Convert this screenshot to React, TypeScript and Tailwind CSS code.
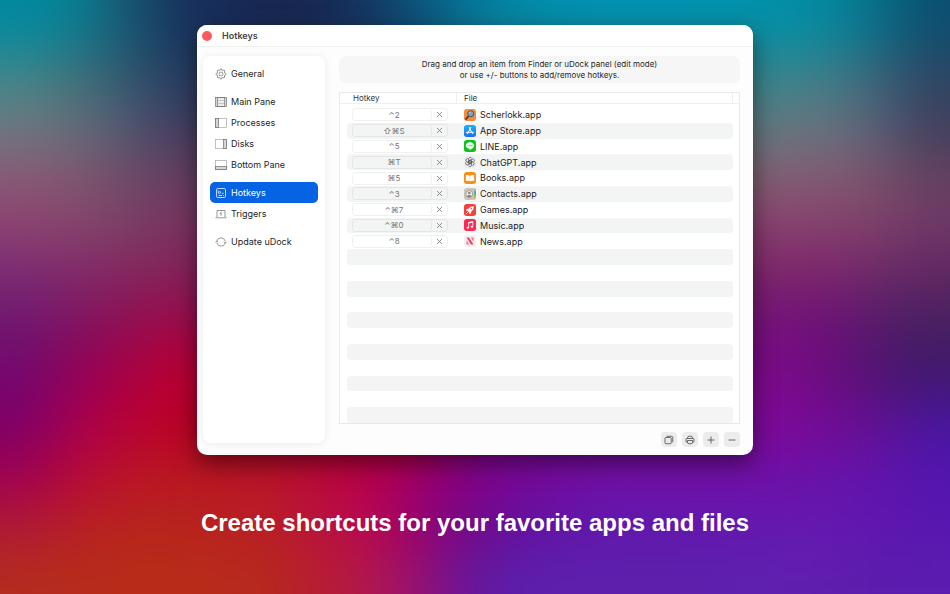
import React, { useState } from "react";

type IconName = "general" | "main" | "processes" | "disks" | "bottom" | "hotkeys" | "triggers" | "update";
type AppName = "scherlokk" | "store" | "line" | "chatgpt" | "books" | "contacts" | "games" | "music" | "news";

type NavEntry = { label: string; icon: IconName };
type HotkeyEntry = { keys: string; file: string; icon: AppName };

const navGroups: NavEntry[][] = [
  [{ label: "General", icon: "general" }],
  [
    { label: "Main Pane", icon: "main" },
    { label: "Processes", icon: "processes" },
    { label: "Disks", icon: "disks" },
    { label: "Bottom Pane", icon: "bottom" },
  ],
  [
    { label: "Hotkeys", icon: "hotkeys" },
    { label: "Triggers", icon: "triggers" },
  ],
  [{ label: "Update uDock", icon: "update" }],
];

const hotkeys: HotkeyEntry[] = [
  { keys: "⌃2", file: "Scherlokk.app", icon: "scherlokk" },
  { keys: "⇧⌘S", file: "App Store.app", icon: "store" },
  { keys: "⌃5", file: "LINE.app", icon: "line" },
  { keys: "⌘T", file: "ChatGPT.app", icon: "chatgpt" },
  { keys: "⌘5", file: "Books.app", icon: "books" },
  { keys: "⌃3", file: "Contacts.app", icon: "contacts" },
  { keys: "⌃⌘7", file: "Games.app", icon: "games" },
  { keys: "⌃⌘0", file: "Music.app", icon: "music" },
  { keys: "⌃8", file: "News.app", icon: "news" },
];

const ROWS = 20;

// wallpaper colours, one string per 50px band: left edge, (middle), right edge
const bands = [
  "0089a0 087f94 185872 17345e 172a58 17254f 162852 123a66 0a5a80 04789a 008aa8 0090b0 0092b2 0092b0 0092ae 0090a8 0489a0 07708a 0a4f70",
  "40888a 3f7078 305a70 243c60 - 35848a 3f8088 3a6478 2e4663",
  "6b7a80 63707a 525a72 403c5e - 607a80 68747f 56627a 3f3f5c",
  "8a5a76 80586f 6f4c68 643e60 - 80606f 855c74 7a5468 644260",
  "8c4270 88446c 7c4068 78345e - 8a4070 86406c 80406a 703868",
  "7a2a74 80286a 84265e 84205a - 7c2468 7c246c 6c2868 602662",
  "6e1670 7e1260 900c52 9c0848 - 74107c 6c0f78 541a6c 44205f",
  "75066e 920058 ac0046 bc0030 - 7c0a88 6c0c80 50146f 40186e",
  "7c006a a80050 b80038 b80024 - 800898 740a98 641090 4816a0",
  "a00050 b80838 ba1428 ba1820 ba1824 ba142c ba0840 b80054 94007a 800088 780898 740ca0 7010a8 7010a8 7010a8 6c10a6 6812a8 6014ac 5414b0",
  "b01838 b82024 b8241e b6241c b82020 b81e28 ba1040 b80450 900070 700a88 6210a0 5e16ac 6018ac 6018ac 6018ae 6418b0 6418b0 6016b0 5816b0",
  "b42c1e b62c1a b82c18 b82c18 b82c1a b6281e b81c34 b01850 90107a 6018a0 5c20ac 5e20ac 5e20ac 5e20ac 5e20ae 6020b0 601eae 5c1cac 5c1cb0",
];

const expandBand = (band: string) => {
  const cells = band.split(" ");
  const gap = cells.indexOf("-");
  if (gap < 0) return cells;
  const left = cells.slice(0, gap);
  const right = cells.slice(gap + 1);
  return [...left, ...Array(5).fill(left[3]), ...Array(6).fill(right[0]), ...right];
};

const Wallpaper = () => {
  const rows = bands.map(expandBand);
  const grid = [rows[0], ...rows, rows[rows.length - 1]].map((r) => [r[0], ...r, r[r.length - 1]]);
  return (
    <svg
      className="absolute inset-0 w-full h-full"
      viewBox="0 0 950 594"
      preserveAspectRatio="none"
      aria-hidden="true"
    >
      <defs>
        <filter id="soften" filterUnits="userSpaceOnUse" x="-100" y="-100" width="1150" height="800" colorInterpolationFilters="sRGB">
          <feGaussianBlur stdDeviation="28" />
        </filter>
      </defs>
      <rect width="950" height="594" fill="#5a1a70" />
      <g filter="url(#soften)">
        {grid.map((row, y) =>
          row.map((color, x) => (
            <rect
              key={`${x}-${y}`}
              x={x === 0 ? -200 : x * 50 - 50}
              y={y === 0 ? -200 : y * 50 - 50}
              width={x === 0 || x === row.length - 1 ? 200 : 51}
              height={y === 0 || y === grid.length - 1 ? 200 : 51}
              fill={`#${color}`}
            />
          ))
        )}
      </g>
    </svg>
  );
};

const navShapes: Record<IconName, React.ReactNode> = {
  general: (
    <>
      <path d="M10.7 2h2.6l.6 2.3 1.9.8 2.1-1.2 1.9 1.9-1.2 2.1.8 1.9 2.3.7v2.9l-2.3.7-.8 1.9 1.2 2.1-1.9 1.9-2.1-1.2-1.9.8-.6 2.3h-2.6l-.6-2.3-1.9-.8-2.1 1.2-1.9-1.9 1.2-2.1-.8-1.9-2.3-.7v-2.9l2.3-.7.8-1.9-1.2-2.1 1.9-1.9 2.1 1.2 1.9-.8z" />
      <circle cx="12" cy="12" r="4" />
    </>
  ),
  main: (
    <>
      <rect x="1" y="3" width="22" height="18" />
      <rect x="5" y="3" width="14" height="18" fill="currentColor" fillOpacity=".15" />
      <path d="M3 4v16M21 4v16M6 9h12M6 15h12" strokeOpacity=".4" />
    </>
  ),
  processes: (
    <>
      <rect x="1" y="3" width="22" height="18" strokeOpacity=".6" />
      <rect x="1" y="3" width="6" height="18" fill="currentColor" fillOpacity=".3" />
    </>
  ),
  disks: (
    <>
      <rect x="1" y="3" width="22" height="18" strokeOpacity=".6" />
      <rect x="17" y="3" width="6" height="18" fill="currentColor" fillOpacity=".3" />
    </>
  ),
  bottom: (
    <>
      <rect x="1" y="3" width="22" height="18" strokeOpacity=".6" />
      <rect x="1" y="15" width="22" height="6" fill="currentColor" fillOpacity=".3" />
    </>
  ),
  hotkeys: (
    <>
      <rect x="3" y="3" width="18" height="18" rx="2.5" />
      <path d="M6.500 7v5.500h4M9 8l3.500 4.500M14.500 12.500h3M7 17h7M15.500 15.500l2 2" />
    </>
  ),
  triggers: (
    <>
      <path d="M4 18V5h16v13M1 19.500h22" />
      <path d="M12.800 7.500l-2.300 4h3l-2.300 4" />
    </>
  ),
  update: (
    <>
      <path d="M3.500 10.500a8.700 8.700 0 0 1 17 0M20.500 13.500a8.700 8.700 0 0 1-17 0" />
      <path d="M1 13l2.500-3 3 2.500M23 11l-2.500 3-3-2.500" />
    </>
  ),
};

const NavIcon = ({ name }: { name: IconName }) => (
  <svg
    className="w-3 h-3 shrink-0"
    viewBox="0 0 24 24"
    fill="none"
    stroke="currentColor"
    strokeWidth="1.5"
    aria-hidden="true"
  >
    {navShapes[name]}
  </svg>
);

const appShapes: Record<AppName, React.ReactNode> = {
  scherlokk: (
    <>
      <rect width="24" height="24" rx="5.5" fill="#f58a3c" />
      <path d="M10 13.500l-6 6.500" stroke="#3d2f33" strokeWidth="3.400" strokeLinecap="round" />
      <circle cx="13.500" cy="9.500" r="6" fill="#7ba3c8" stroke="#46536b" strokeWidth="2" />
      <path d="M10.500 9a3 3 0 0 1 3-3" stroke="#d8e8f5" strokeWidth="1.500" fill="none" />
    </>
  ),
  store: (
    <>
      <rect width="24" height="24" rx="5.500" fill="url(#blue)" />
      <path d="M10.600 5l6.400 12.500M13.400 5L7 17.500M4.500 14.500h9M16 14.500h3.500" stroke="#fff" strokeWidth="2" strokeLinecap="round" />
    </>
  ),
  line: (
    <>
      <rect width="24" height="24" rx="5.500" fill="#0cc41c" />
      <path d="M12 4.500c-4.700 0-8.300 2.900-8.300 6.500 0 3.200 2.700 5.700 6.600 6.300.8.200.9.700.7 2.700 3.700-1.900 9.300-5 9.300-9 0-3.600-3.600-6.500-8.300-6.500z" fill="#fff" />
      <path d="M7.500 9.500v3h1.500M11 9.500v3M13 12.500v-3l1.500 3v-3M17.500 9.500h-1.200v3h1.200" stroke="#0cc41c" strokeWidth=".8" />
    </>
  ),
  chatgpt: (
    <>
      <rect width="24" height="24" rx="5.500" fill="#ececec" />
      <g fill="none" stroke="#4a4a4a" strokeWidth="1.300">
        {[0, 60, 120, 180, 240, 300].map((angle) => (
          <path key={angle} transform={`rotate(${angle} 12 12)`} d="M9 10.300V6.300a3.500 3.500 0 0 1 6.600-1.700M9 7.500l5.600 3.200v3.500" />
        ))}
      </g>
    </>
  ),
  books: (
    <>
      <rect width="24" height="24" rx="5.500" fill="#fb8f16" />
      <path d="M11.700 7.500C9.500 5.600 6.300 5.600 3.700 6.500v11.700c2.600-.9 5.800-.9 8 .5zM12.300 7.500c2.200-1.900 5.400-1.900 8-1v11.700c-2.600-.9-5.800-.9-8 .5z" fill="#fff" />
    </>
  ),
  contacts: (
    <>
      <rect width="24" height="24" rx="5.500" fill="#c9c6ba" />
      <path d="M20.500 1a4 4 0 0 1 3.500 4v3h-3.500z" fill="#a5a5a0" />
      <path d="M20.500 7H24v5h-3.500z" fill="#2ba8e8" />
      <path d="M20.500 12H24v5h-3.500z" fill="#44cc55" />
      <path d="M20.500 17H24v2a4 4 0 0 1-3.500 4z" fill="#f6a52a" />
      <circle cx="10.500" cy="12" r="7" fill="#eeece2" stroke="#8b897f" strokeWidth="1.400" />
      <circle cx="10.500" cy="10" r="2.600" fill="#8b897f" />
      <path d="M5.800 16.800c1.200-3.600 8.200-3.600 9.400 0-2.600 2.800-6.800 2.800-9.400 0z" fill="#8b897f" />
    </>
  ),
  games: (
    <>
      <rect width="24" height="24" rx="5.500" fill="#f5403c" />
      <path d="M19.500 4.500c-5-.4-8.300 1.800-10.500 5l-3.500.5-1.800 3 3.300.3 3.700 3.700.3 3.300 3-1.800.5-3.500c3.200-2.200 5.400-5.500 5-10.500z" fill="#fff" />
      <circle cx="14.500" cy="9.500" r="1.500" fill="#f5403c" />
      <path d="M7.300 16.700l-2.800 2.800" stroke="#fff" strokeWidth="1.800" strokeLinecap="round" />
    </>
  ),
  music: (
    <>
      <rect width="24" height="24" rx="5.500" fill="#fa2a52" />
      <path d="M9.300 17V7l8.400-2v10" stroke="#fff" strokeWidth="1.600" />
      <path d="M9.300 8l8.400-2" stroke="#fff" strokeWidth="2.500" />
      <ellipse cx="7.500" cy="17.300" rx="2.500" ry="2" fill="#fff" />
      <ellipse cx="15.900" cy="15.300" rx="2.500" ry="2" fill="#fff" />
    </>
  ),
  news: (
    <>
      <rect width="24" height="24" rx="5.500" fill="#f1eff1" />
      <path d="M5 5h5l9 14h-5z" fill="#f23a58" />
      <path d="M5 10.500L10.500 19H5zM19 13.500L13.500 5H19z" fill="#f2708a" />
    </>
  ),
};

const AppIcon = ({ name }: { name: AppName }) => (
  <svg className="w-3 h-3 shrink-0" viewBox="0 0 24 24" aria-hidden="true">
    <defs>
      <linearGradient id="blue" x1="0" y1="0" x2="0" y2="1">
        <stop offset="0" stopColor="#1fb0f8" />
        <stop offset="1" stopColor="#1d6ff0" />
      </linearGradient>
    </defs>
    <g fill="none">{appShapes[name]}</g>
  </svg>
);

const Sidebar = () => {
  const [active, setActive] = useState("Hotkeys");

  return (
    <nav className="w-[122px] shrink-0 mb-1 px-[7px] py-[7px] flex flex-col gap-[7px] rounded-lg bg-white shadow-[0_1px_8px_rgba(0,0,0,0.08)]">
      {navGroups.map((group, i) => (
        <ul key={i}>
          {group.map((entry) => (
            <li key={entry.label}>
              <button
                type="button"
                onClick={() => setActive(entry.label)}
                className={
                  active === entry.label
                    ? "w-full h-[21px] px-[5px] flex items-center gap-1 rounded-[5px] bg-[#0563e4] text-white"
                    : "w-full h-[21px] px-[5px] flex items-center gap-1 rounded-[5px] text-[#777]"
                }
              >
                <NavIcon name={entry.icon} />
                <span className={active === entry.label ? "text-[9px]" : "text-[9px] text-[#262626]"}>
                  {entry.label}
                </span>
              </button>
            </li>
          ))}
        </ul>
      ))}
    </nav>
  );
};

const HotkeyField = ({ item }: { item: HotkeyEntry }) => (
  <div className="w-24 h-[13px] ml-[5px] flex rounded-[3px] border border-black/6">
    <input
      readOnly
      value={item.keys}
      aria-label={`Hotkey for ${item.file}`}
      className="w-[79px] min-w-0 rounded-[3px] border-r border-black/6 pl-1 text-center text-[8px] text-[#777] outline-none"
    />
    <button type="button" aria-label={`Clear ${item.file}`} className="flex-1 flex items-center justify-center text-[#777]">
      <svg className="w-[7px] h-[7px]" viewBox="0 0 14 14" stroke="currentColor" strokeWidth="1.6" aria-hidden="true">
        <path d="M2 2l10 10M12 2L2 12" />
      </svg>
    </button>
  </div>
);

const HotkeyTable = () => (
  <div className="mt-[9px] border border-[#e9e9e9] bg-white">
    <table className="w-full h-[330px] table-fixed border-separate border-spacing-0 text-left">
      <colgroup>
        <col className="w-[7px]" />
        <col className="w-[110px]" />
        <col />
        <col className="w-[6px]" />
      </colgroup>
      <thead>
        <tr className="text-[8px] leading-[10px] text-[#333]">
          <td className="h-[11px] p-0 border-b border-[#efefef]" />
          <th className="py-0 pl-[6px] font-normal border-b border-r border-[#efefef]">Hotkey</th>
          <th className="py-0 pl-[7px] font-normal border-b border-r border-[#efefef]">File</th>
          <td className="p-0 border-b border-[#efefef]" />
        </tr>
        <tr aria-hidden="true">
          <td className="h-[3px] p-0" colSpan={4} />
        </tr>
      </thead>
      <tbody>
        {Array.from({ length: ROWS }, (_, i) => {
          const item = hotkeys[i];
          const striped = i % 2 === 1;
          return (
            <tr key={i}>
              <td className="p-0" />
              <td className={striped ? "p-0 rounded-l-[4px] bg-[#f3f4f4]" : "p-0"}>
                {item ? <HotkeyField item={item} /> : <div className="h-[13px]" />}
              </td>
              <td className={striped ? "p-0 rounded-r-[4px] bg-[#f3f4f4]" : "p-0"}>
                {item && (
                  <div className="h-[13px] pl-[7px] flex items-center gap-1 text-[9px] text-[#222]">
                    <AppIcon name={item.icon} />
                    {item.file}
                  </div>
                )}
              </td>
              <td className="p-0" />
            </tr>
          );
        })}
      </tbody>
    </table>
  </div>
);

const ToolButton = ({ label, children }: { label: string; children: React.ReactNode }) => (
  <button
    type="button"
    aria-label={label}
    className="w-4 h-[15px] flex items-center justify-center rounded-[4px] bg-[#ececec] text-[#4a4a4a]"
  >
    <svg className="w-2.5 h-2.5" viewBox="0 0 20 20" fill="none" stroke="currentColor" strokeWidth="1.6" aria-hidden="true">
      {children}
    </svg>
  </button>
);

const App = () => {
  return (
    <div className="relative min-h-screen overflow-hidden font-['Inter','Noto_Sans',sans-serif]">
      <Wallpaper />
      <main className="relative flex flex-col items-center pt-[25px]">
        <section className="w-full max-w-[556px] rounded-[10px] bg-[#fdfdfd] shadow-[0_8px_24px_rgba(0,0,0,0.5)]">
          <header className="h-[22px] px-[5px] flex items-center gap-[10px] rounded-t-[10px] border-b border-[#f0f0f0] bg-white">
            <button type="button" aria-label="Close" className="w-[10px] h-[10px] rounded-full bg-[#ff5a5f]" />
            <h1 className="text-[9px] font-semibold text-[#444]">Hotkeys</h1>
          </header>
          <div className="pt-[9px] pb-2 pl-[6px] pr-[13px] flex gap-[14px]">
            <Sidebar />
            <div className="flex-1 min-w-0">
              <p className="h-[27px] flex items-center justify-center rounded-[7px] bg-[#f6f6f6] text-center text-[8px] leading-[11px] text-[#262626]">
                Drag and drop an item from Finder or uDock panel (edit mode)
                <br />
                or use +/- buttons to add/remove hotkeys.
              </p>
              <HotkeyTable />
              <div className="mt-2 flex justify-end gap-[5px]">
                <ToolButton label="Duplicate">
                  <rect x="2" y="5" width="12.500" height="12.500" rx="2" />
                  <path d="M5 2.500h10a2.500 2.500 0 0 1 2.500 2.500v9.500" />
                </ToolButton>
                <ToolButton label="Print">
                  <path d="M5 7V5.500a3 3 0 0 1 3-3h4a3 3 0 0 1 3 3V7M5 14.500H4a2 2 0 0 1-2-2V9a2 2 0 0 1 2-2h12a2 2 0 0 1 2 2v3.500a2 2 0 0 1-2 2h-1" />
                  <path d="M5 11h10v3.500a3 3 0 0 1-3 3H8a3 3 0 0 1-3-3z" />
                </ToolButton>
                <ToolButton label="Add hotkey">
                  <path d="M10 3v14M3 10h14" />
                </ToolButton>
                <ToolButton label="Remove hotkey">
                  <path d="M3 10h14" />
                </ToolButton>
              </div>
            </div>
          </div>
        </section>
        <h2 className="mt-[52px] text-2xl font-bold text-white font-['Liberation_Sans',sans-serif]">
          Create shortcuts for your favorite apps and files
        </h2>
      </main>
    </div>
  );
};

export default App;
